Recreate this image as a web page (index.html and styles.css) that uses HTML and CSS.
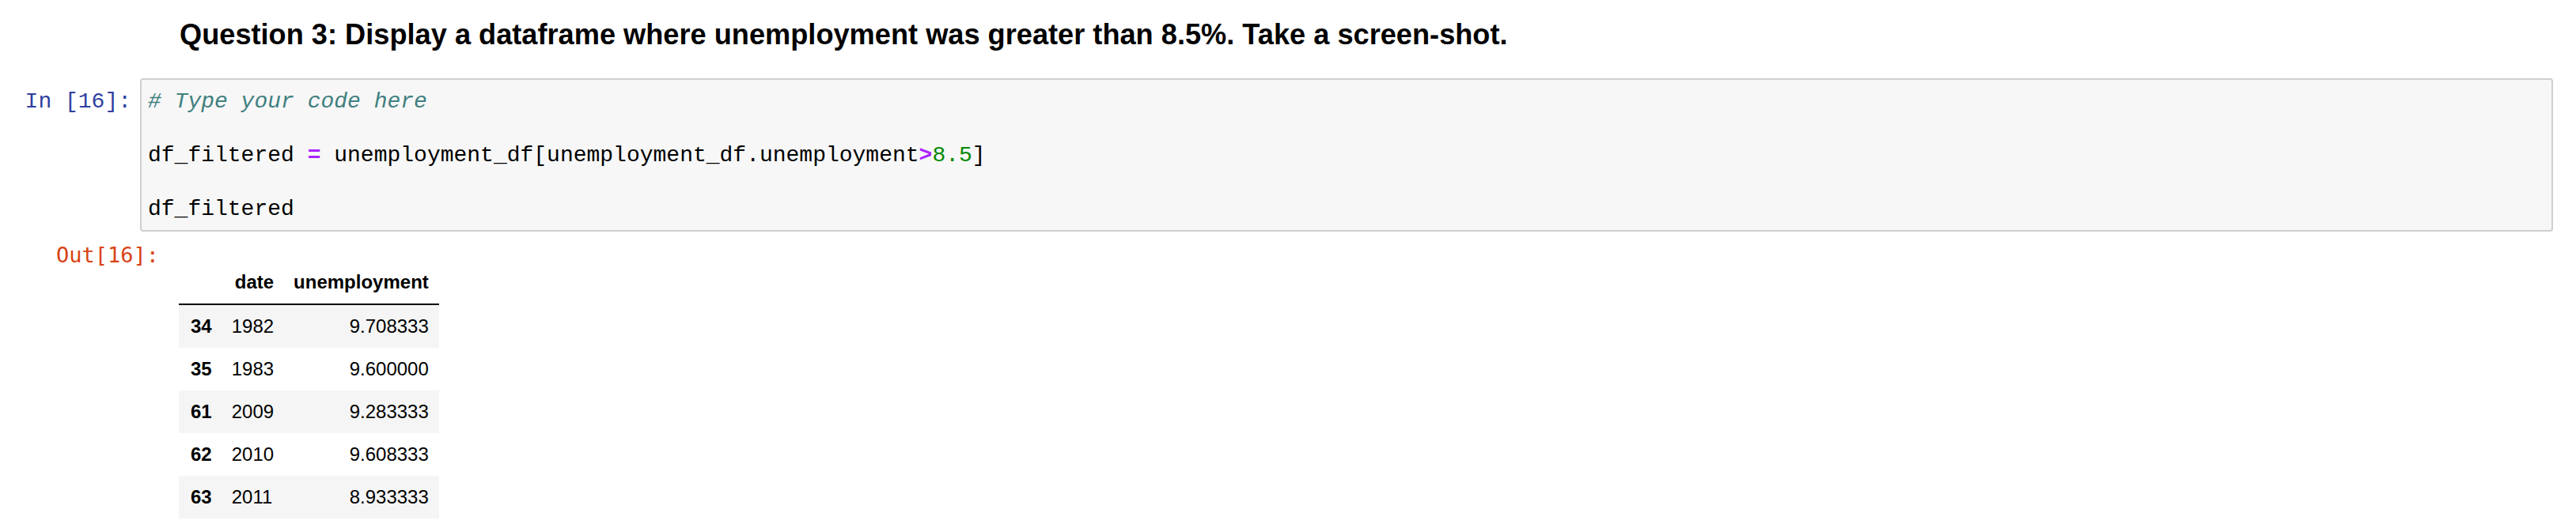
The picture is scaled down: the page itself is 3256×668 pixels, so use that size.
FILE: index.html
```html
<!DOCTYPE html>
<html>
<head>
<meta charset="utf-8">
<link rel="stylesheet" href="styles.css">
</head>
<body>
<div class="notebook">
  <div class="cell md-cell">
    <div class="prompt-space"></div>
    <div class="md-render">
      <h3 class="md-h3">Question 3: Display a dataframe where unemployment was greater than 8.5%. Take a screen-shot.</h3>
    </div>
  </div>

  <div class="cell code-cell">
    <div class="input-row">
      <div class="prompt in-prompt">In&nbsp;[16]:</div>
      <div class="input-area">
        <div class="code-line"><span class="cm-comment"># Type your code here</span></div>
        <div class="code-line blank"></div>
        <div class="code-line">df_filtered <span class="cm-op">=</span> unemployment_df[unemployment_df.unemployment<span class="cm-op">&gt;</span><span class="cm-num">8.5</span>]</div>
        <div class="code-line blank"></div>
        <div class="code-line">df_filtered</div>
      </div>
    </div>

    <div class="output-row">
      <div class="prompt out-prompt">Out[16]:</div>
      <div class="output-area">
        <table class="dataframe">
          <thead>
            <tr><th></th><th>date</th><th>unemployment</th></tr>
          </thead>
          <tbody>
            <tr><th>34</th><td>1982</td><td>9.708333</td></tr>
            <tr><th>35</th><td>1983</td><td>9.600000</td></tr>
            <tr><th>61</th><td>2009</td><td>9.283333</td></tr>
            <tr><th>62</th><td>2010</td><td>9.608333</td></tr>
            <tr><th>63</th><td>2011</td><td>8.933333</td></tr>
          </tbody>
        </table>
      </div>
    </div>
  </div>
</div>
</body>
</html>
```

FILE: styles.css
```css
html, body {
  margin: 0;
  padding: 0;
  background: #ffffff;
}

.notebook {
  display: flex;
  flex-direction: column;
  padding-right: 29px;
  font-family: "Liberation Sans", Arial, sans-serif;
  color: #000;
}

.cell {
  display: flex;
}

.md-cell {
  flex-direction: row;
  padding-top: 23px;
}

.prompt-space {
  width: 177px;
  flex: none;
}

.md-render {
  padding-left: 50px;
}

.md-h3 {
  margin: 0;
  font-size: 36.2px;
  line-height: 42px;
  font-weight: bold;
}

.code-cell {
  flex-direction: column;
  margin-top: 34px;
}

.input-row {
  display: flex;
  flex-direction: row;
  align-items: flex-start;
}

.prompt {
  flex: none;
  text-align: right;
  white-space: nowrap;
}

.in-prompt {
  width: 177px;
  box-sizing: border-box;
  padding-right: 11px;
  padding-top: 13px;
  font-family: "Liberation Mono", "Courier New", monospace;
  font-size: 28px;
  line-height: 34px;
  color: #303F9F;
}

.input-area {
  flex: 1;
  min-width: 0;
  background: #f7f7f7;
  border: 2px solid #cfcfcf;
  border-radius: 4px;
  padding: 11px 8px 9px 8px;
  font-family: "Liberation Mono", "Courier New", monospace;
  font-size: 28px;
  line-height: 34px;
  color: #000;
}

.code-line {
  height: 34px;
  white-space: pre;
}

.cm-comment {
  color: #408080;
  font-style: italic;
}

.cm-op {
  color: #AA22FF;
  font-weight: bold;
}

.cm-num {
  color: #008800;
}

.output-row {
  display: flex;
  flex-direction: row;
  align-items: flex-start;
  gap: 25px;
}

.out-prompt {
  width: 201px;
  margin-top: 13px;
  font-family: "DejaVu Sans Mono", Menlo, monospace;
  font-size: 27px;
  line-height: 34px;
  color: #D84315;
}

.output-area {
  padding-top: 37px;
}

.dataframe {
  border-collapse: collapse;
  border-spacing: 0;
  font-family: "Liberation Sans", Arial, sans-serif;
  font-size: 24px;
  color: #000;
}

.dataframe th,
.dataframe td {
  padding: 12px 13px 12px 12px;
  line-height: 30px;
  text-align: right;
  vertical-align: middle;
  white-space: nowrap;
}

.dataframe thead th {
  font-weight: bold;
  border-bottom: 2px solid #000;
}

.dataframe tbody th {
  font-weight: bold;
  text-align: left;
  padding-left: 15px;
}

.dataframe tbody td:nth-child(2) {
  text-align: left;
}

.dataframe tbody tr:nth-child(odd) {
  background: #f5f5f5;
}
```
